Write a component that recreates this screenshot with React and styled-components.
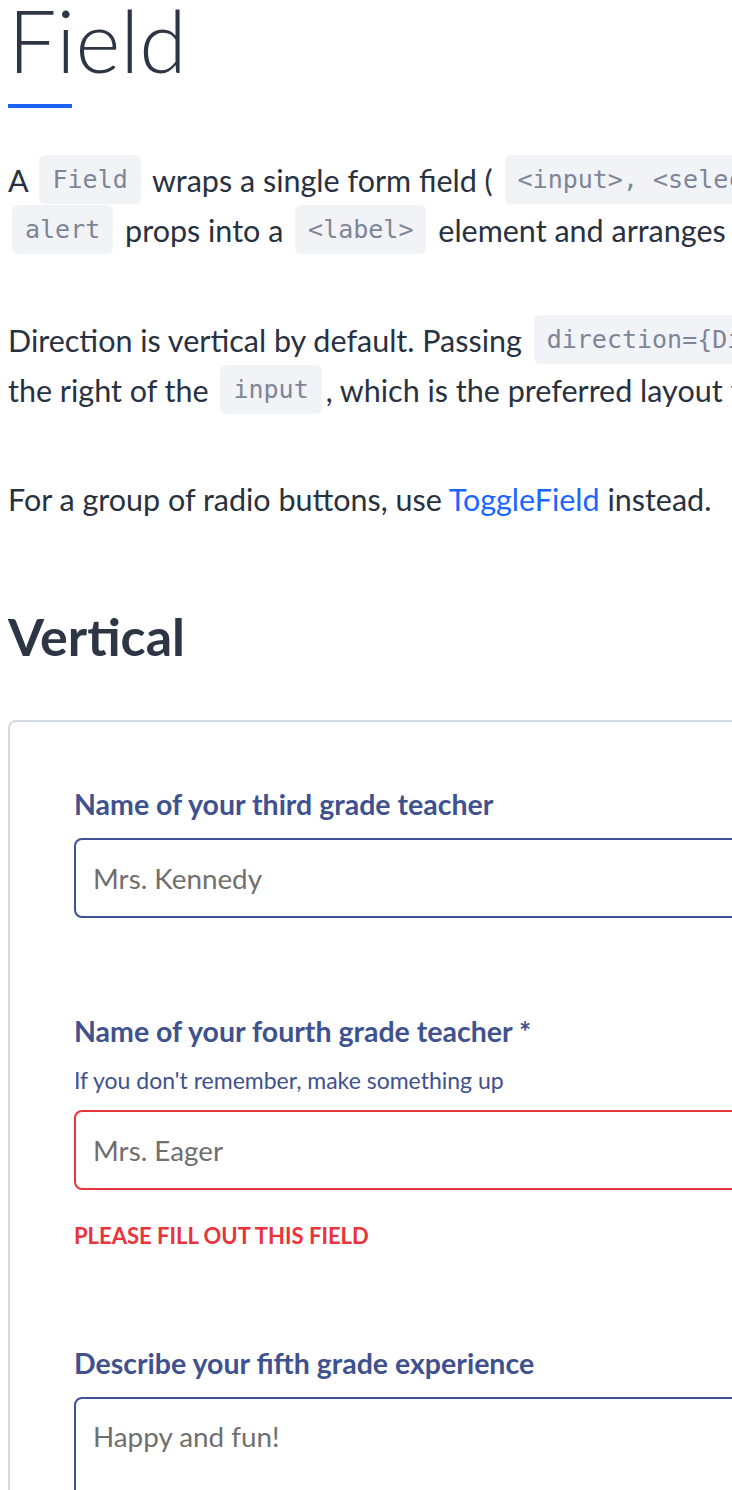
import React from "react";
import styled, { createGlobalStyle } from "styled-components";

const GlobalStyle = createGlobalStyle`
  html, body {
    margin: 0;
    padding: 0;
    overflow: hidden;
    background: #ffffff;
  }
  body {
    font-family: Lato, "Noto Sans", sans-serif;
    color: #283140;
  }
`;

const Page = styled.div`
  width: 1400px;
  padding: 0 8px;
`;

const Title = styled.h1`
  margin: 0;
  font-size: 86px;
  line-height: 80px;
  font-weight: 300;
  color: #2e3646;
`;

const TitleRule = styled.div`
  width: 64px;
  height: 4px;
  background: #1a62f0;
  margin-top: 24px;
`;

const Paragraph = styled.p`
  margin: ${({ $top }) => $top}px 0 0;
  font-size: 30.5px;
  line-height: 50px;
  white-space: nowrap;
`;

const Code = styled.code`
  display: inline-block;
  font-family: "DejaVu Sans Mono", "Liberation Mono", monospace;
  font-size: 25px;
  line-height: 49px;
  padding: 0 13px;
  margin: 0 4px;
  background: #f2f3f7;
  color: #7d8597;
  border-radius: 6px;
  vertical-align: top;
`;

const Link = styled.a`
  color: #1a66ff;
  text-decoration: none;
`;

const Heading = styled.h2`
  margin: 80px 0 0;
  font-size: 52px;
  line-height: 64px;
  font-weight: 700;
  color: #2e3646;
`;

const Demo = styled.div`
  margin-top: 52px;
  width: 1200px;
  border: 2px solid #d3d9e3;
  border-radius: 8px;
  padding: 64px 0 0 64px;
  display: flex;
  flex-direction: column;
  gap: 95px;
`;

const FieldWrap = styled.div`
  display: flex;
  flex-direction: column;
  width: 900px;
`;

const Label = styled.label`
  font-size: 28.5px;
  line-height: 36px;
  font-weight: 700;
  color: #40518f;
`;

const Description = styled.div`
  margin-top: 17px;
  font-size: 23px;
  line-height: 28px;
  color: #40518f;
`;

const Input = styled.input`
  box-sizing: border-box;
  margin-top: 16px;
  height: 80px;
  width: 100%;
  border: 2px solid ${({ $error }) => ($error ? "#e8343c" : "#3e5196")};
  border-radius: 8px;
  padding: 0 17px;
  font-family: Lato, "Noto Sans", sans-serif;
  font-size: 27.8px;
  color: #6f6f6f;
  background: #fff;
  outline: none;
`;

const TextArea = styled.textarea`
  box-sizing: border-box;
  margin-top: 16px;
  height: 200px;
  width: 100%;
  border: 2px solid #3e5196;
  border-radius: 8px;
  padding: 20px 17px;
  font-family: Lato, "Noto Sans", sans-serif;
  font-size: 27.8px;
  line-height: 36px;
  color: #6f6f6f;
  background: #fff;
  outline: none;
  resize: none;
`;

const ErrorText = styled.div`
  margin-top: 32px;
  font-size: 22px;
  line-height: 28px;
  font-weight: 700;
  color: #e8343c;
  text-transform: uppercase;
`;

export default function App() {
  return (
    <>
      <GlobalStyle />
      <Page>
        <Title>Field</Title>
        <TitleRule />
        <Paragraph $top={47}>
          A <Code>Field</Code> wraps a single form field ( <Code>&lt;input&gt;, &lt;select&gt;, or &lt;textarea&gt;</Code> ) and passes its label, description and
          <br />
          <Code>alert</Code> props into a <Code>&lt;label&gt;</Code> element and arranges them in a consistent layout.
        </Paragraph>
        <Paragraph $top={60}>
          Direction is vertical by default. Passing <Code>direction={"{"}Direction.HORIZONTAL{"}"}</Code> places the label to
          <br />
          the right of the <Code>input</Code>, which is the preferred layout for checkboxes.
        </Paragraph>
        <Paragraph $top={59}>
          For a group of radio buttons, use <Link href="#">ToggleField</Link> instead.
        </Paragraph>
        <Heading>Vertical</Heading>
        <Demo>
          <FieldWrap>
            <Label>Name of your third grade teacher</Label>
            <Input readOnly defaultValue="Mrs. Kennedy" />
          </FieldWrap>
          <FieldWrap>
            <Label>Name of your fourth grade teacher *</Label>
            <Description>If you don't remember, make something up</Description>
            <Input readOnly $error defaultValue="Mrs. Eager" />
            <ErrorText>Please fill out this field</ErrorText>
          </FieldWrap>
          <FieldWrap>
            <Label>Describe your fifth grade experience</Label>
            <TextArea readOnly defaultValue="Happy and fun!" />
          </FieldWrap>
        </Demo>
      </Page>
    </>
  );
}
